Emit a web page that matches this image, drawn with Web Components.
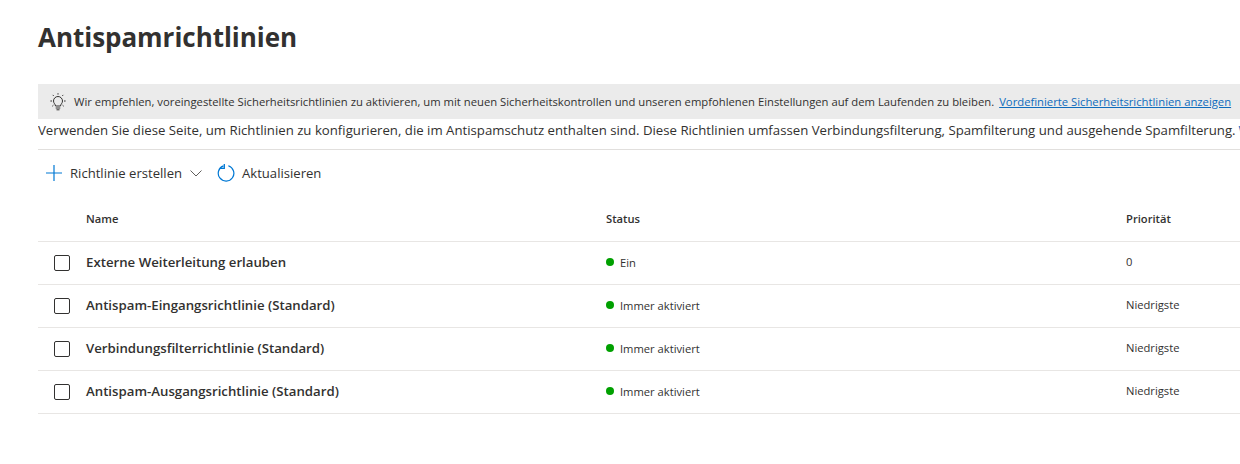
<!DOCTYPE html>
<html lang="de"><head><meta charset="utf-8"><title>Antispamrichtlinien</title>
<style>html,body{margin:0;background:#fff;overflow:hidden;height:464px}body{font-family:"Open Sans","Noto Sans",sans-serif;color:#323130}</style>
</head><body>
<policy-page>
<page-title>Antispamrichtlinien</page-title>
<info-banner link="Vordefinierte Sicherheitsrichtlinien anzeigen">Wir empfehlen, voreingestellte Sicherheitsrichtlinien zu aktivieren, um mit neuen Sicherheitskontrollen und unseren empfohlenen Einstellungen auf dem Laufenden zu bleiben.</info-banner>
<page-desc link="Weitere Informationen">Verwenden Sie diese Seite, um Richtlinien zu konfigurieren, die im Antispamschutz enthalten sind. Diese Richtlinien umfassen Verbindungsfilterung, Spamfilterung und ausgehende Spamfilterung.</page-desc>
<command-bar></command-bar>
<policy-header></policy-header>
<policy-row name="Externe Weiterleitung erlauben" status="Ein" prio="0"></policy-row>
<policy-row name="Antispam-Eingangsrichtlinie (Standard)" status="Immer aktiviert" prio="Niedrigste"></policy-row>
<policy-row name="Verbindungsfilterrichtlinie (Standard)" status="Immer aktiviert" prio="Niedrigste"></policy-row>
<policy-row name="Antispam-Ausgangsrichtlinie (Standard)" status="Immer aktiviert" prio="Niedrigste"></policy-row>
</policy-page>
<script>
const def=(n,html)=>customElements.define(n,class extends HTMLElement{connectedCallback(){const r=this.attachShadow({mode:'open'});r.innerHTML=typeof html==='function'?html(this):html;}});
const a=(e,k)=>e.getAttribute(k)||'';
def('policy-page',`<style>:host{display:block;padding:0 0 0 38px;width:1202px;overflow:hidden}</style><slot></slot>`);
def('page-title',`<style>:host{display:block;height:84px;box-sizing:border-box;padding-top:19px;font-size:26px;line-height:36px;font-weight:700;color:#323130;letter-spacing:-.03px}</style><slot></slot>`);
def('info-banner',e=>`<style>:host{display:flex;align-items:center;height:35px;background:#ebebeb;font-size:11.28px;color:#323130;white-space:nowrap;overflow:hidden;padding-left:12px}
svg{width:16px;height:18px;margin-right:8px;flex:none}a{color:#0f6cbd;text-decoration:underline;margin-left:5px}</style>
<svg viewBox="0 0 16 18" fill="none" stroke="#323130" stroke-width="1"><path d="M5.5 13c0-1.800-2-2.600-2-5a4.500 4.500 0 0 1 9 0c0 2.400-2 3.200-2 5z"/><path d="M5.700 15h4.600M6.500 16.800h3"/><path d="M8 .2v1.400M2.700 1.900l1 1M13.300 1.900l-1 1M.4 8h1.600M14 8h1.600M2.300 13.200l1.100-1M13.700 13.200l-1.100-1"/></svg>
<span><slot></slot></span><a>${a(e,'link')}</a>`);
def('page-desc',e=>`<style>:host{display:block;height:31px;box-sizing:border-box;border-bottom:1px solid #e1dfdd;font-size:13.21px;line-height:22px;white-space:nowrap;overflow:hidden;color:#323130}a{color:#0f6cbd;margin-left:3px}</style><slot></slot><a>${a(e,'link')}</a>`);
def('command-bar',`<style>:host{display:flex;align-items:center;height:46px;font-size:13.1px;color:#323130;padding-left:8px}
.i{flex:none}span{white-space:nowrap}</style>
<svg class="i" width="16" height="16" viewBox="0 0 16 16" style="margin-right:8px"><path d="M8 0v16M0 8h16" stroke="#0078d4" stroke-width="1.2"/></svg>
<span>Richtlinie erstellen</span>
<svg class="i" width="14" height="14" viewBox="0 0 14 14" fill="none" style="margin:0 14px 0 7px"><path d="M1.500 4.500 7 10l5.500-5.500" stroke="#605e5c" stroke-width="1"/></svg>
<svg class="i" width="18" height="18" viewBox="0 0 18 18" fill="none" style="margin-right:7px"><path d="M6.500 1.900a7.800 7.800 0 1 0 4.800-.1" stroke="#0078d4" stroke-width="1.2"/><path d="M7.300 0v4.300H3" stroke="#0078d4" stroke-width="1.300"/></svg>
<span>Aktualisieren</span>`);
const grid=`:host{display:grid;grid-template-columns:48px 520px 520px 1fr;align-items:center;box-sizing:border-box;border-bottom:1px solid #e8e6e4;white-space:nowrap}`;
def('policy-header',`<style>${grid}:host{height:46px;font-size:11.2px;font-weight:600;color:#323130}</style><span></span><span>Name</span><span>Status</span><span>Priorität</span>`);
def('policy-row',e=>`<style>${grid}:host{height:43px;font-size:11.2px}
.c{border:1px solid #323130;border-radius:2px;margin-left:16px;display:block;width:14px;height:14px}
.n{font-size:13.22px;font-weight:600;color:#323130;padding-bottom:3px}
.s{display:flex;align-items:center;color:#323130;padding-bottom:2px}.d{width:8px;height:8px;border-radius:50%;background:#00a000;margin-right:6px}.p{padding-bottom:3px}</style>
<span class="c"></span><span class="n">${a(e,'name')}</span><span class="s"><span class="d"></span>${a(e,'status')}</span><span class="p">${a(e,'prio')}</span>`);
</script>
</body></html>
